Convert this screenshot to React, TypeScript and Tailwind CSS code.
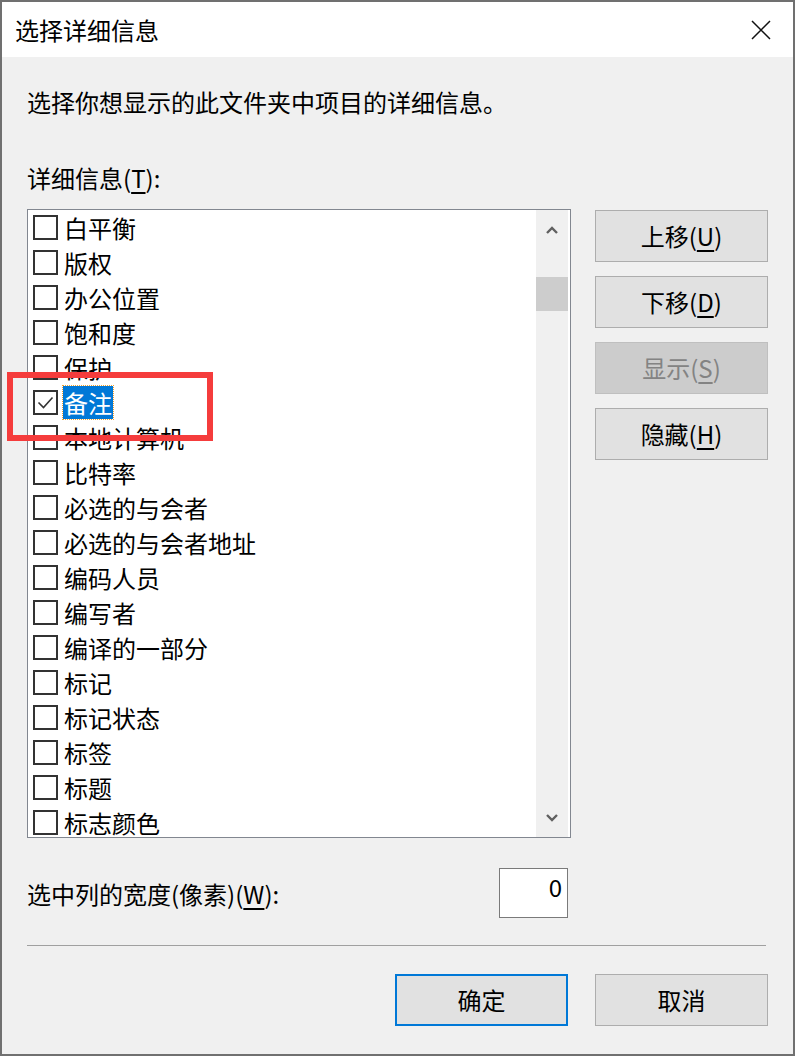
import React from "react";

const items = [
  "白平衡",
  "版权",
  "办公位置",
  "饱和度",
  "保护",
  "备注",
  "本地计算机",
  "比特率",
  "必选的与会者",
  "必选的与会者地址",
  "编码人员",
  "编写者",
  "编译的一部分",
  "标记",
  "标记状态",
  "标签",
  "标题",
  "标志颜色",
];

function Btn({
  children,
  disabled,
  primary,
}: {
  children: React.ReactNode;
  disabled?: boolean;
  primary?: boolean;
}) {
  const base =
    "w-[173px] h-[52px] flex items-center justify-center text-[24px] leading-[32px]";
  if (disabled)
    return (
      <div className={`${base} border border-[#bfbfbf] bg-[#cccccc] text-[#838383]`}>
        {children}
      </div>
    );
  if (primary)
    return (
      <div className={`${base} border-2 border-[#0078d7] bg-[#e1e1e1] text-black`}>
        {children}
      </div>
    );
  return (
    <div className={`${base} border border-[#adadad] bg-[#e1e1e1] text-black`}>
      {children}
    </div>
  );
}

function Row({ label, checked }: { label: string; checked?: boolean }) {
  return (
    <div className="h-[35px] flex items-center pl-[5px] shrink-0">
      <div className="w-[25px] h-[25px] border-2 border-[#333333] bg-white shrink-0 flex items-center justify-center">
        {checked && (
          <svg width="19" height="19" viewBox="0 0 19 19">
            <path d="M2.5 9.5 L7.5 14.5 L16.5 4.5" fill="none" stroke="#333333" strokeWidth="1.6" />
          </svg>
        )}
      </div>
      {checked ? (
        <span className="ml-[5px] px-[1px] bg-[#0078d7] text-white outline outline-1 outline-dotted outline-[#f0a030] text-[24px] leading-[33px] whitespace-nowrap">
          {label}
        </span>
      ) : (
        <span className="ml-[6px] text-[24px] leading-[33px] text-black whitespace-nowrap">{label}</span>
      )}
    </div>
  );
}

export default function App() {
  return (
    <div className="relative w-[795px] h-[1056px] border-2 border-[#707070] bg-[#f0f0f0] overflow-hidden font-['Noto_Sans_CJK_SC','Microsoft_YaHei',sans-serif] text-black">
      {/* Title bar */}
      <div className="h-[55px] bg-white flex items-center justify-between pl-[13px] pr-[22px]">
        <span className="text-[24px] leading-[32px]">选择详细信息</span>
        <svg width="20" height="20" viewBox="0 0 20 20">
          <path d="M1 1 L19 19 M19 1 L1 19" stroke="#111" strokeWidth="1.5" />
        </svg>
      </div>

      <div className="px-[25px]">
        <div className="mt-[29px] text-[24px] leading-[32px]">
          选择你想显示的此文件夹中项目的详细信息。
        </div>
        <div className="mt-[44px] text-[24px] leading-[32px]">
          详细信息(<span className="underline underline-offset-4">T</span>):
        </div>

        <div className="mt-[15px] flex gap-[24px]">
          {/* List */}
          <div className="w-[544px] h-[629px] border border-[#828790] bg-white flex overflow-hidden">
            <div className="flex-1 flex flex-col overflow-hidden">
              {items.map((it) => (
                <Row key={it} label={it} checked={it === "备注"} />
              ))}
            </div>
            <div className="w-[34px] bg-[#f0f0f0] border-r-2 border-white flex flex-col items-center relative">
              <svg className="mt-[15px]" width="14" height="10" viewBox="0 0 14 10">
                <path d="M2 8 L7 3 L12 8" fill="none" stroke="#606060" strokeWidth="2.4" />
              </svg>
              <div className="mt-[42px] w-full h-[34px] bg-[#cdcdcd]" />
              <div className="flex-1" />
              <svg className="mb-[14px]" width="14" height="10" viewBox="0 0 14 10">
                <path d="M2 2 L7 7 L12 2" fill="none" stroke="#606060" strokeWidth="2.4" />
              </svg>
            </div>
          </div>

          {/* Side buttons */}
          <div className="mt-[1px] flex flex-col gap-[14px]">
            <Btn>
              上移(<span className="underline underline-offset-4">U</span>)
            </Btn>
            <Btn>
              下移(<span className="underline underline-offset-4">D</span>)
            </Btn>
            <Btn disabled>
              显示(<span className="underline underline-offset-4">S</span>)
            </Btn>
            <Btn>
              隐藏(<span className="underline underline-offset-4">H</span>)
            </Btn>
          </div>
        </div>

        <div className="mt-[30px] flex items-center">
          <div className="w-[472px] text-[24px] leading-[32px] pt-[2px]">
            选中列的宽度(像素)(<span className="underline underline-offset-4">W</span>):
          </div>
          <div className="w-[69px] h-[50px] border border-[#7a7a7a] bg-white text-right pr-[5px] pt-[2px] text-[24px] leading-[32px]">
            0
          </div>
        </div>

        <div className="mt-[27px] h-px w-[739px] bg-[#a0a0a0]" />

        <div className="mt-[28px] flex justify-end gap-[27px]">
          <Btn primary>确定</Btn>
          <Btn>取消</Btn>
        </div>
      </div>

      {/* Red annotation rectangle */}
      <div className="absolute left-[5px] top-[370px] w-[206px] h-[69px] border-[6px] border-[#f53c3c] pointer-events-none" />
    </div>
  );
}
